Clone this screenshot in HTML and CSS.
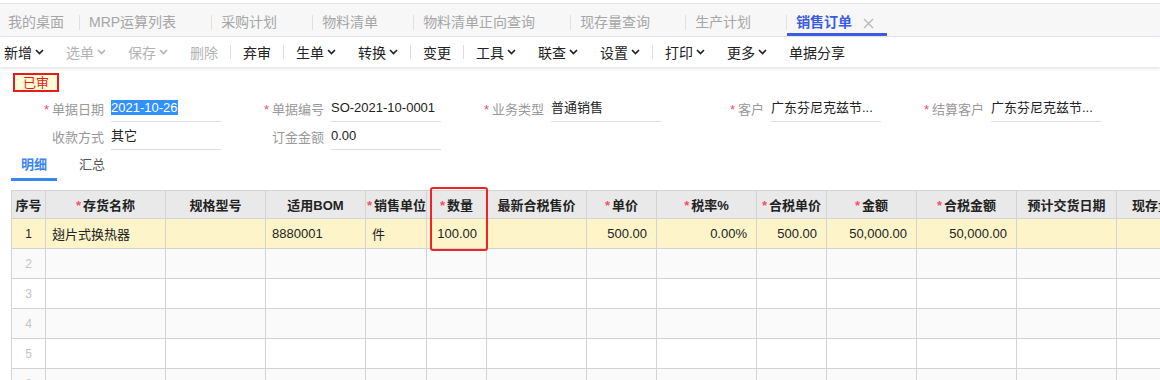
FILE: index.html
```html
<!DOCTYPE html>
<html lang="zh-CN">
<head>
    <meta charset="UTF-8">
    <title>销售订单</title>
    <link rel="stylesheet" href="styles.css">
</head>
<body>

    <div class="tabbar">
        <div class="tab first">我的桌面</div>
        <span class="tab-sep"></span>
        <div class="tab">MRP运算列表<span class="tab-close"></span></div>
        <span class="tab-sep"></span>
        <div class="tab">采购计划<span class="tab-close"></span></div>
        <span class="tab-sep"></span>
        <div class="tab">物料清单<span class="tab-close"></span></div>
        <span class="tab-sep"></span>
        <div class="tab">物料清单正向查询<span class="tab-close"></span></div>
        <span class="tab-sep"></span>
        <div class="tab">现存量查询<span class="tab-close"></span></div>
        <span class="tab-sep"></span>
        <div class="tab">生产计划<span class="tab-close"></span></div>
        <span class="tab-sep"></span>
        <div class="tab active">销售订单<span class="tab-close">
            <svg width="11" height="11" viewBox="0 0 11 11"><path d="M1 1L10 10M10 1L1 10" stroke="#b8b8b8" stroke-width="1.4" fill="none"/></svg>
        </span></div>
    </div>

    <div class="toolbar">
        <span class="tool">新增<svg width="9" height="6" viewBox="0 0 9 6"><polyline points="1,1 4.5,4.5 8,1" fill="none" stroke="currentColor" stroke-width="1.7"/></svg></span>
        <span class="tool disabled">选单<svg width="9" height="6" viewBox="0 0 9 6"><polyline points="1,1 4.5,4.5 8,1" fill="none" stroke="currentColor" stroke-width="1.7"/></svg></span>
        <span class="tool disabled">保存<svg width="9" height="6" viewBox="0 0 9 6"><polyline points="1,1 4.5,4.5 8,1" fill="none" stroke="currentColor" stroke-width="1.7"/></svg></span>
        <span class="tool disabled">删除</span>
        <span class="sep"></span>
        <span class="tool">弃审</span>
        <span class="sep"></span>
        <span class="tool">生单<svg width="9" height="6" viewBox="0 0 9 6"><polyline points="1,1 4.5,4.5 8,1" fill="none" stroke="currentColor" stroke-width="1.7"/></svg></span>
        <span class="tool">转换<svg width="9" height="6" viewBox="0 0 9 6"><polyline points="1,1 4.5,4.5 8,1" fill="none" stroke="currentColor" stroke-width="1.7"/></svg></span>
        <span class="sep"></span>
        <span class="tool">变更</span>
        <span class="sep"></span>
        <span class="tool">工具<svg width="9" height="6" viewBox="0 0 9 6"><polyline points="1,1 4.5,4.5 8,1" fill="none" stroke="currentColor" stroke-width="1.7"/></svg></span>
        <span class="tool">联查<svg width="9" height="6" viewBox="0 0 9 6"><polyline points="1,1 4.5,4.5 8,1" fill="none" stroke="currentColor" stroke-width="1.7"/></svg></span>
        <span class="tool">设置<svg width="9" height="6" viewBox="0 0 9 6"><polyline points="1,1 4.5,4.5 8,1" fill="none" stroke="currentColor" stroke-width="1.7"/></svg></span>
        <span class="sep"></span>
        <span class="tool">打印<svg width="9" height="6" viewBox="0 0 9 6"><polyline points="1,1 4.5,4.5 8,1" fill="none" stroke="currentColor" stroke-width="1.7"/></svg></span>
        <span class="tool">更多<svg width="9" height="6" viewBox="0 0 9 6"><polyline points="1,1 4.5,4.5 8,1" fill="none" stroke="currentColor" stroke-width="1.7"/></svg></span>
        <span class="tool">单据分享</span>
    </div>

    <div class="bill">
        <div class="status">已审</div>

        <div class="form">
            <div class="form-row">
                <div class="field">
                    <label class="field-label"><span class="req">*</span>单据日期</label>
                    <div class="field-value"><span class="selected">2021-10-26</span></div>
                </div>
                <div class="field">
                    <label class="field-label"><span class="req">*</span>单据编号</label>
                    <div class="field-value">SO-2021-10-0001</div>
                </div>
                <div class="field">
                    <label class="field-label"><span class="req">*</span>业务类型</label>
                    <div class="field-value">普通销售</div>
                </div>
                <div class="field">
                    <label class="field-label"><span class="req">*</span>客户</label>
                    <div class="field-value">广东芬尼克兹节...</div>
                </div>
                <div class="field">
                    <label class="field-label"><span class="req">*</span>结算客户</label>
                    <div class="field-value">广东芬尼克兹节...</div>
                </div>
            </div>
            <div class="form-row">
                <div class="field">
                    <label class="field-label">收款方式</label>
                    <div class="field-value">其它</div>
                </div>
                <div class="field">
                    <label class="field-label">订金金额</label>
                    <div class="field-value">0.00</div>
                </div>
            </div>
        </div>

        <div class="detail-tabs">
            <span class="dtab active">明细</span>
            <span class="dtab">汇总</span>
        </div>

        <div class="grid-wrap">
            <table class="grid">
                <colgroup>
                    <col style="width:34px"><col style="width:120px"><col style="width:100px"><col style="width:100px">
                    <col style="width:61px"><col style="width:60px"><col style="width:100px"><col style="width:70px">
                    <col style="width:100px"><col style="width:70px"><col style="width:90px"><col style="width:100px">
                    <col style="width:100px"><col style="width:70px">
                </colgroup>
                <thead>
                    <tr>
                        <th>序号</th>
                        <th><span class="req">*</span>存货名称</th>
                        <th>规格型号</th>
                        <th>适用BOM</th>
                        <th><span class="req">*</span>销售单位</th>
                        <th><span class="req">*</span>数量</th>
                        <th>最新合税售价</th>
                        <th><span class="req">*</span>单价</th>
                        <th><span class="req">*</span>税率%</th>
                        <th><span class="req">*</span>合税单价</th>
                        <th><span class="req">*</span>金额</th>
                        <th><span class="req">*</span>合税金额</th>
                        <th>预计交货日期</th>
                        <th>现存量</th>
                    </tr>
                </thead>
                <tbody>
                    <tr class="current">
                        <td class="idx">1</td>
                        <td>翅片式换热器</td>
                        <td></td>
                        <td>8880001</td>
                        <td>件</td>
                        <td class="num">100.00</td>
                        <td></td>
                        <td class="num">500.00</td>
                        <td class="num">0.00%</td>
                        <td class="num">500.00</td>
                        <td class="num">50,000.00</td>
                        <td class="num">50,000.00</td>
                        <td></td>
                        <td></td>
                    </tr>
                    <tr class="alt"><td class="idx">2</td><td></td><td></td><td></td><td></td><td></td><td></td><td></td><td></td><td></td><td></td><td></td><td></td><td></td></tr>
                    <tr><td class="idx">3</td><td></td><td></td><td></td><td></td><td></td><td></td><td></td><td></td><td></td><td></td><td></td><td></td><td></td></tr>
                    <tr class="alt"><td class="idx">4</td><td></td><td></td><td></td><td></td><td></td><td></td><td></td><td></td><td></td><td></td><td></td><td></td><td></td></tr>
                    <tr><td class="idx">5</td><td></td><td></td><td></td><td></td><td></td><td></td><td></td><td></td><td></td><td></td><td></td><td></td><td></td></tr>
                    <tr class="alt"><td class="idx">6</td><td></td><td></td><td></td><td></td><td></td><td></td><td></td><td></td><td></td><td></td><td></td><td></td><td></td></tr>
                </tbody>
            </table>
            <div class="qty-mark"></div>
        </div>
    </div>

</body>
</html>
```

FILE: styles.css
```css
* {
    box-sizing: border-box;
}

body {
    margin: 0;
    font-family: "Liberation Sans", "Noto Sans CJK SC", sans-serif;
    font-size: 13px;
    color: #222;
    background-color: #fff;
    overflow: hidden;
}

/* top page tabs */
.tabbar {
    display: flex;
    align-items: flex-start;
    margin-top: 3px;
    height: 34px;
    background-color: #f7f7f7;
    border-top: 1px solid #e4e4e4;
    border-bottom: 1px solid #e1e5f0;
}

.tab {
    display: flex;
    height: 32px;
    padding: 9px 13px 0 9px;
    line-height: 18px;
    font-size: 14px;
    color: #a6a6a6;
    white-space: nowrap;
}

.tab.first {
    padding-left: 8px;
    padding-right: 15px;
}

.tab-close {
    display: flex;
    align-items: center;
    justify-content: center;
    width: 12px;
    margin-left: 10px;
}

.tab.active {
    color: #3a5be2;
    font-weight: bold;
    border-bottom: 3px solid #3a5be2;
}

.tab-sep {
    width: 1px;
    height: 15px;
    margin-top: 11px;
    background-color: #e0e0e0;
}

/* toolbar */
.toolbar {
    display: flex;
    align-items: center;
    height: 30px;
    padding-left: 4px;
    font-size: 14px;
    background-color: #fff;
    box-shadow: 0 2px 3px rgba(0, 0, 0, 0.1);
}

.tool {
    display: flex;
    align-items: center;
    margin-left: 22px;
    color: #222;
    white-space: nowrap;
}

.tool:first-child,
.sep + .tool {
    margin-left: 0;
}

.tool svg {
    margin-left: 3px;
}

.tool.disabled {
    color: #b3b3b3;
}

.sep {
    width: 1px;
    height: 14px;
    margin: 0 12px;
    background-color: #dcdcdc;
}

/* bill header */
.bill {
    padding-top: 6px;
}

.status {
    width: 46px;
    height: 19px;
    margin-left: 13px;
    border: 2px solid #e31c1c;
    background-color: #fffbd6;
    color: #e31c1c;
    line-height: 15px;
    text-align: center;
}

.form {
    margin-top: 2px;
}

.form-row {
    display: flex;
    height: 28px;
    padding-left: 1px;
}

.field {
    display: flex;
    align-items: center;
    width: 220px;
}

.field-label {
    width: 103px;
    text-align: right;
    color: #999;
    white-space: nowrap;
}

.req {
    color: #f2506a;
    margin-right: 2px;
}

.field-label .req {
    margin-right: 3px;
}

.field-value {
    width: 110px;
    height: 28px;
    margin-left: 7px;
    line-height: 27px;
    border-bottom: 1px solid #dcdcdc;
    white-space: nowrap;
    overflow: hidden;
}

.selected {
    background-color: #3390ff;
    color: #fff;
}

.detail-tabs {
    display: flex;
    height: 31px;
    padding-left: 11px;
}

.dtab {
    padding: 2px 10px 0;
    margin-right: 12px;
    line-height: 26px;
    color: #555;
}

.dtab.active {
    color: #3a86f0;
    font-weight: bold;
    border-bottom: 3px solid #3a86f0;
}

/* grid */
.grid-wrap {
    position: relative;
    margin: 9px 0 0 11px;
}

.grid {
    border-collapse: collapse;
    table-layout: fixed;
    width: 1175px;
}

.grid th,
.grid td {
    border: 1px solid #d3d3d3;
    padding: 0 6px;
    white-space: nowrap;
    overflow: hidden;
}

.grid thead tr {
    height: 28px;
}

.grid th {
    padding: 0 1px;
    background-color: #e9e9e9;
    font-weight: bold;
    text-align: center;
}

.grid tbody tr {
    height: 30px;
}

.grid tr.alt td {
    background-color: #fafafa;
}

.grid tr.current td {
    background-color: #fdf5c9;
}

.grid td.idx {
    text-align: center;
    color: #c4c4c4;
    font-size: 12px;
}

.grid tr.current td.idx {
    color: #222;
}

.grid td.num {
    text-align: right;
    padding-right: 9px;
}

.qty-mark {
    position: absolute;
    left: 419px;
    top: -3px;
    width: 58px;
    height: 64px;
    border: 2px solid #f02424;
    border-radius: 3px;
}
```
